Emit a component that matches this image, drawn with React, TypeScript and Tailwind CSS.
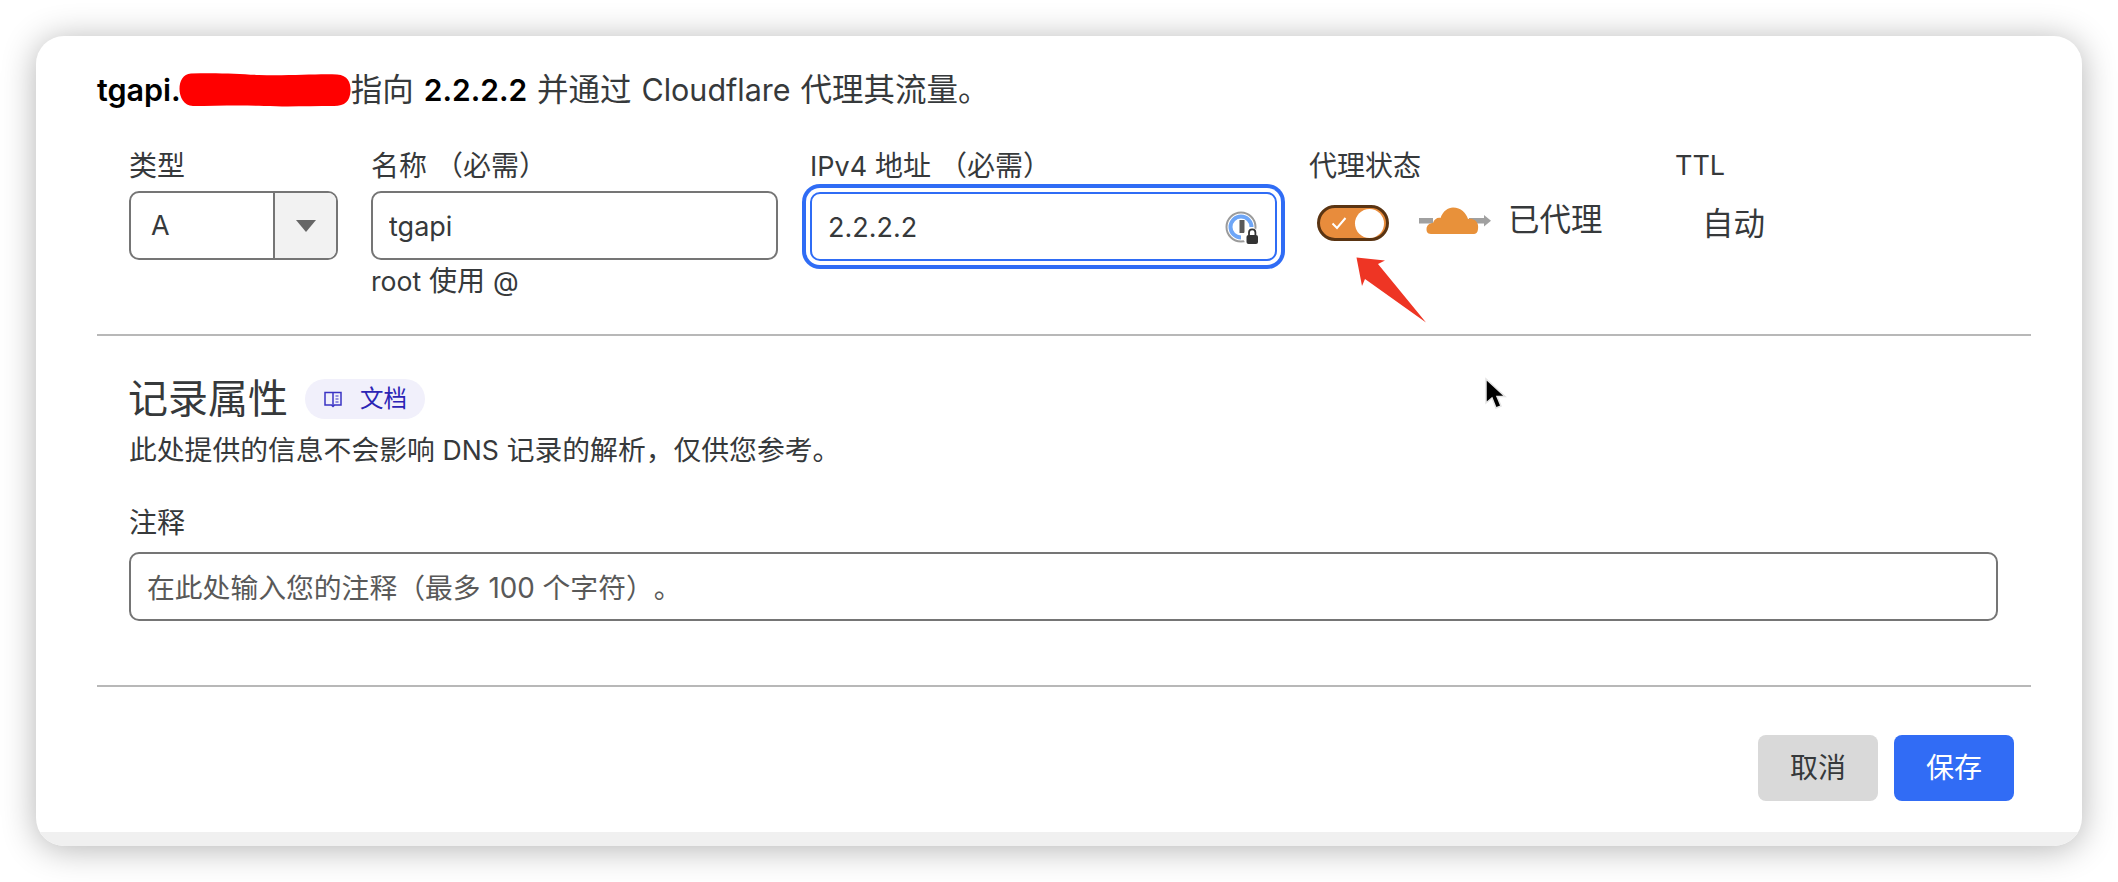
function OnePassword() {
  return (
    <svg width="34" height="34" viewBox="0 0 34 34" className="absolute right-[16px] top-[17px]">
      <circle cx="16" cy="16" r="14.5" fill="white" stroke="#9b9b9b" strokeWidth="2" />
      <path d="M26.5 16 A10.5 10.5 0 1 0 16 26.5" fill="none" stroke="#6ea6f7" strokeWidth="4" />
      <rect x="14.5" y="9" width="5" height="13" fill="#5a5a5a" />
      <circle cx="27" cy="26" r="9" fill="white" />
      <path d="M24 24 v-2.5 a3.2 3.2 0 0 1 6.4 0 V24" fill="none" stroke="#333" strokeWidth="1.8" />
      <rect x="21.5" y="24" width="11.5" height="9" rx="2" fill="#333" />
    </svg>
  );
}

function Cloud() {
  return (
    <svg width="72" height="28" viewBox="0 0 72 28" className="shrink-0">
      <rect x="0" y="11" width="14" height="5.5" fill="#a0a0a0" />
      <rect x="50" y="11" width="16" height="5.5" fill="#a0a0a0" />
      <path d="M65 8 L72 13.7 L65 19.5 Z" fill="#a0a0a0" />
      <path
        d="M12 27 C8 27 7.5 24 7.5 22 C7.5 18 11 16 14 16 C15 12 19 10 21.5 11 C24 4 29 0.5 34 0.5 C42 0.5 47 6 49 12 C53 11 58 13 59 18 C59.5 23 58.5 27 55 27 Z"
        fill="#e8913a"
      />
    </svg>
  );
}

function Book() {
  return (
    <svg width="20" height="20" viewBox="0 0 20 20" fill="none" stroke="#3a33c4" strokeWidth="1.5" className="shrink-0">
      <path d="M10 3.5 H2 V16 H8.5 L10 17.5 L11.5 16 H18 V3.5 Z" />
      <path d="M10 3.5 V17" />
      <path d="M12.5 7 H15.5 M12.5 10 H15.5 M12.5 13 H15.5" strokeWidth="1.2" />
    </svg>
  );
}

export default function App() {
  return (
    <div className="h-[882px] w-[2118px] overflow-hidden bg-white pl-[36px] pt-[36px] font-['Inter','Noto_Sans_CJK_SC',sans-serif] text-[#36393b] [text-spacing-trim:space-all]">
      <div className="relative flex h-[810px] w-[2046px] flex-col overflow-hidden rounded-[28px] bg-white shadow-[0_3px_34px_rgba(0,0,0,0.3)]">
        <div className="flex-1 pl-[61px] pr-[51px] pt-[34px]">
          <div className="flex h-[40px] items-center text-[31.5px] leading-[40px] whitespace-pre [word-spacing:1px]">
            <span className="text-[30.5px] font-semibold text-black">tgapi.</span>
            <svg width="172" height="34" viewBox="0 0 172 34" className="-ml-[2px] shrink-0">
              <path
                d="M12 0.5 C40 -0.5 60 1 80 2 C110 3 140 0.5 158 1.5 C170 2 172 12 171.5 18 C171 28 166 33 155 33 C130 33 110 34 85 33 C60 32 35 33 14 33 C5 33 0.5 24 0.5 16 C0.5 8 4 1 12 0.5 Z"
                fill="#ff0000"
              />
            </svg>
            <span>指向 </span>
            <span className="text-[30px] font-semibold text-black">2.2.2.2</span>
            <span> 并通过 <span className="text-[30.5px]">Cloudflare</span> 代理其流量。</span>
          </div>

          <div className="mt-[36px] flex pl-[32px] text-[28px]">
            <div className="w-[209px]">
              <div className="mb-[5px] leading-[40px]">类型</div>
              <div className="flex h-[69px] overflow-hidden rounded-[10px] border-2 border-[#757575] text-[27px]">
                <div className="flex flex-1 items-center pl-[20px] pt-[2px]">A</div>
                <div className="flex w-[63px] items-center justify-center border-l-2 border-[#757575] bg-[#f2f2f2]">
                  <svg width="20" height="12" viewBox="0 0 20 12">
                    <path d="M0 0 H20 L10 12 Z" fill="#666666" />
                  </svg>
                </div>
              </div>
            </div>

            <div className="ml-[33px] w-[407px]">
              <div className="mb-[5px] leading-[40px]">名称 （必需）</div>
              <input
                readOnly
                defaultValue="tgapi"
                className="h-[69px] w-full rounded-[10px] border-2 border-[#757575] bg-white pl-[16px] pt-[2px] text-[27px] outline-none"
              />
              <div className="mt-[1px] leading-[40px]"><span className="text-[26.6px]">root</span> 使用 <span className="text-[26.6px]">@</span></div>
            </div>

            <div className="ml-[32px] w-[467px]">
              <div className="mb-[5px] leading-[40px]"><span className="text-[27px]">IPv4</span> 地址 （必需）</div>
              <div className="relative h-[69px] rounded-[10px] border-2 border-[#2f6cf5] bg-white shadow-[0_0_0_4px_white,0_0_0_8px_#2f6cf5]">
                <input
                  readOnly
                  defaultValue="2.2.2.2"
                  className="h-full w-full rounded-[10px] bg-transparent pl-[16px] pt-[2px] text-[27px] outline-none"
                />
                <OnePassword />
              </div>
            </div>

            <div className="ml-[32px] w-[367px]">
              <div className="leading-[40px]">代理状态</div>
              <div className="mt-[19px] flex items-center pl-[8px]">
                <div className="flex h-[36px] w-[72px] shrink-0 items-center justify-between rounded-full border-[3px] border-[#5a3412] bg-[#e88c3c] pl-[11px] pr-[2px]">
                  <svg width="16" height="14" viewBox="0 0 16 14" fill="none" stroke="white" strokeWidth="2">
                    <path d="M1.5 7.5 L6 12 L14.5 2" />
                  </svg>
                  <div className="h-[29px] w-[29px] rounded-full bg-white" />
                </div>
                <div className="ml-[30px] -mt-[4px]">
                  <Cloud />
                </div>
                <div className="ml-[17px] -mt-[6px] text-[31.5px] leading-[40px]">已代理</div>
              </div>
            </div>

            <div>
              <div className="-ml-[1px] text-[27px] leading-[40px]">TTL</div>
              <div className="mt-[18px] pl-[26px] text-[31.5px] leading-[40px]">自动</div>
            </div>
          </div>

          <div className="mt-[33px] h-[2px] bg-[#b8b8b8]" />

          <div className="mt-[39px] flex items-center pl-[32px]">
            <div className="-ml-[1px] text-[40px] leading-[48px]">记录属性</div>
            <div className="ml-[17px] flex h-[40px] w-[120px] items-center rounded-full bg-[#f1f0fb] pl-[18px] text-[23.5px] text-[#2c25b5]">
              <Book />
              <span className="ml-[17px]">文档</span>
            </div>
          </div>
          <div className="mt-[7px] pl-[32px] text-[27.8px] leading-[40px]">
            此处提供的信息不会影响 <span className="text-[26.6px]">DNS</span> 记录的解析，仅供您参考。
          </div>

          <div className="mt-[33px] pl-[32px] text-[28px] leading-[40px]">注释</div>
          <div className="mt-[9px] pl-[32px] pr-[33px]">
            <input
              readOnly
              placeholder="在此处输入您的注释（最多 100 个字符）。"
              className="h-[69px] w-full rounded-[10px] border-2 border-[#757575] bg-white pl-[16px] pt-[2px] text-[27.8px] outline-none [text-spacing-trim:space-all] placeholder:text-[#595959]"
            />
          </div>

          <div className="mt-[64px] h-[2px] bg-[#b8b8b8]" />

          <div className="mt-[48px] flex justify-end gap-[16px] pr-[17px]">
            <div className="flex h-[66px] w-[120px] items-center justify-center rounded-[8px] bg-[#d9d9d9] text-[28px]">取消</div>
            <div className="flex h-[66px] w-[120px] items-center justify-center rounded-[8px] bg-[#316cf5] text-[28px] text-white">保存</div>
          </div>
        </div>
        <div className="h-[14px] shrink-0 bg-[#f0f0f0]" />

        <svg width="72" height="66" viewBox="0 0 72 66" className="absolute left-[1320px] top-[221px]">
          <path d="M0.5 0.5 L29 3.5 L22 7 L70 65.5 L9 22 L6 29 Z" fill="#ee3524" />
        </svg>
        <svg width="28" height="36" viewBox="0 0 28 36" className="absolute left-[1448px] top-[341px]">
          <path d="M2 2 L2 26 L8 21 L12 31 L17 29 L13 19.5 L21 19.5 Z" fill="black" stroke="#e4e4e4" strokeWidth="1.5" />
        </svg>
      </div>
    </div>
  );
}
